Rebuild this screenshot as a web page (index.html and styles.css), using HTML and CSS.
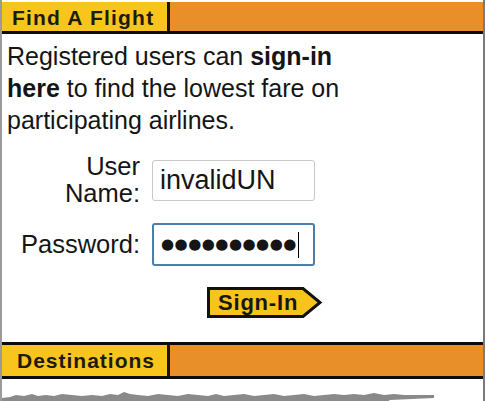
FILE: index.html
```html
<!DOCTYPE html>
<html>
<head>
<meta charset="utf-8">
<link rel="stylesheet" href="styles.css">
</head>
<body>
<div class="panel">
  <div class="header">
    <div class="tab">Find A Flight</div>
    <div class="fill"></div>
  </div>
  <p class="intro"><span>Registered users can</span> <b>sign-in</b> <b>here</b> <span>to find the lowest fare on</span> <span>participating airlines.</span></p>
  <div class="form">
    <label class="lbl">User<br>Name:</label>
    <div class="field">invalidUN</div>
    <label class="lbl">Password:</label>
    <div class="field focus"><span class="dots">●●●●●●●●●●</span><span class="caret"></span></div>
  </div>
  <div class="btn-row">
    <svg class="signin" width="116" height="31" viewBox="0 0 116 31">
      <polygon points="1.5,1.5 96,1.5 113,15.5 96,29.5 1.5,29.5" fill="#f8c31b" stroke="#111" stroke-width="3"/>
    </svg>
    <span class="btn-text">Sign-In</span>
  </div>
  <div class="header header2">
    <div class="tab tab2">Destinations</div>
    <div class="fill"></div>
  </div>
  <svg class="torn" width="481" height="21" viewBox="0 0 481 21">
    <path d="M0,21 L0,14 L8,13 L14,11 L22,12 L30,10 L36,12 L44,11 L52,12 L60,10 L70,11 L80,12 L90,11 L100,12 L108,10 L116,11 L122,8 L128,10 L136,11 L146,12 L156,10 L166,11 L176,12 L186,10 L196,11 L206,12 L214,10 L222,12 L232,11 L242,10 L252,12 L262,11 L272,10 L282,12 L292,11 L302,10 L312,12 L322,11 L332,10 L342,11 L352,10 L362,11 L372,9 L382,11 L392,10 L402,11 L412,11 L420,11 L432,11 L432,14 L388,16 L380,21 Z" fill="#8a8a8a"/>
    <rect x="0" y="17" width="481" height="4" fill="#cfcfcf"/>
  </svg>
</div>
</body>
</html>
```
FILE: styles.css
```css
html, body {
  margin: 0;
  padding: 0;
  background: #fff;
}
.panel {
  width: 481px;
  height: 401px;
  border-left: 2px solid #9a9a9a;
  border-right: 2px solid #7a7a7a;
  font-family: "Liberation Sans", Arial, sans-serif;
  color: #151515;
  position: relative;
  overflow: hidden;
}
.header {
  display: flex;
  height: 29px;
  margin-top: 2px;
  border-bottom: 3px solid #0b0b0b;
}
.tab {
  width: 168px;
  background: #f9c51c;
  border-right: 3px solid #141414;
  font-weight: bold;
  font-size: 21px;
  line-height: 31px;
  padding-left: 10px;
  box-sizing: border-box;
  color: #1b1b10;
  letter-spacing: 1.2px;
}
.tab2 {
  padding-left: 15px;
  letter-spacing: 1px;
}
.fill {
  flex: 1;
  background: #e98f2a;
}
.intro {
  margin: 0;
  padding: 6px 10px 0 5px;
  font-size: 25px;
  line-height: 32px;
  width: 360px;
}
.form {
  display: grid;
  grid-template-columns: 138px 163px;
  column-gap: 12px;
  row-gap: 16px;
  margin-top: 17px;
  align-items: center;
}
.lbl {
  text-align: right;
  font-size: 25.5px;
  line-height: 27px;
}
.field {
  height: 41px;
  box-sizing: border-box;
  border: 1px solid #c9c9c9;
  border-radius: 3px;
  font-size: 27px;
  line-height: 39px;
  padding-left: 7px;
  display: flex;
  align-items: center;
}
.field.focus {
  border: 2px solid #4b7eaa;
  height: 43px;
}
.dots {
  font-size: 15px;
  letter-spacing: 0.5px;
  font-family: "DejaVu Sans", sans-serif;
}
.caret {
  display: inline-block;
  width: 1px;
  height: 26px;
  background: #000;
  margin-left: 1px;
}
.btn-row {
  position: relative;
  margin: 21px 0 0 205px;
  width: 116px;
  height: 31px;
}
.signin {
  display: block;
}
.btn-text {
  position: absolute;
  left: 11px;
  top: 0;
  line-height: 31px;
  font-weight: bold;
  font-size: 22px;
  letter-spacing: 0.8px;
  color: #161616;
}
.header2 {
  margin-top: 24px;
  border-top: 3px solid #0b0b0b;
  height: 31px;
}
.header2 .tab {
  line-height: 32px;
}
.torn {
  display: block;
  margin-top: 5px;
}
```
